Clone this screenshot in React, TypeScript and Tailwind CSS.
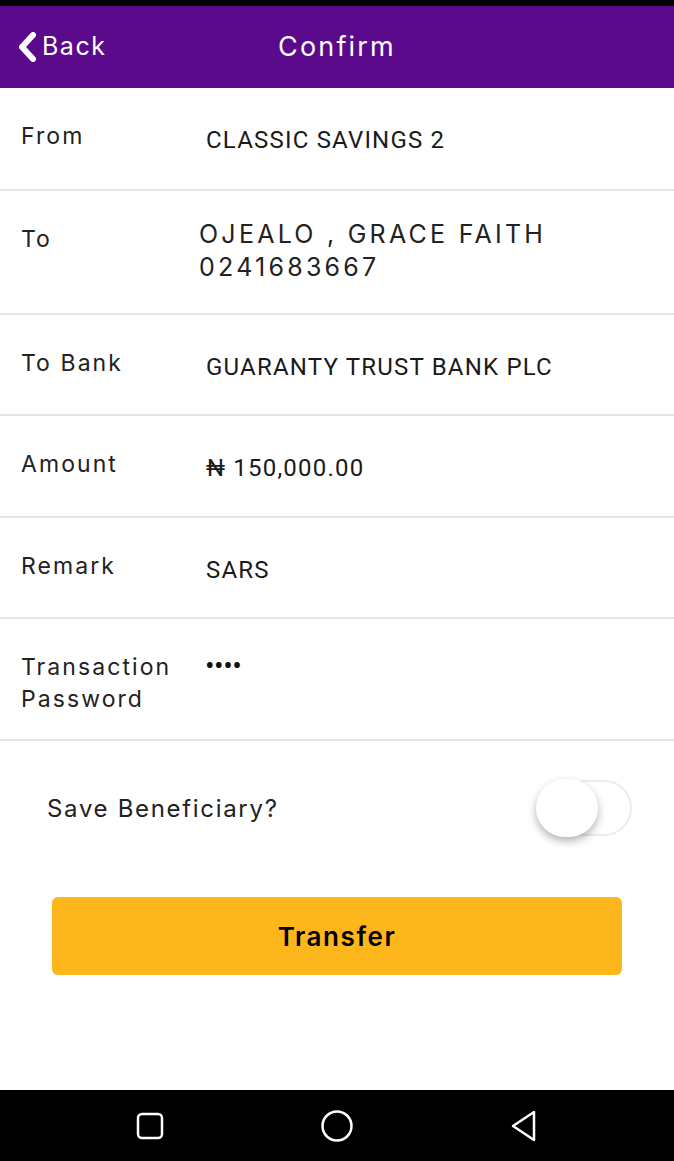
const label = "font-['Inter','Open_Sans',sans-serif] text-[23px] tracking-[0.09em] text-[#222]";
const value = "font-['Roboto',sans-serif] text-[24px] tracking-[0.05em] text-[#1a1a1a]";

function Row({ name, children, h }: { name: React.ReactNode; children: React.ReactNode; h: string }) {
    return (
        <div className={`flex border-b-2 border-[#e6e6e6] ${h}`}>
            <div className={`${label} w-[185px] shrink-0 pl-[21px] pt-[32px] leading-[32px]`}>{name}</div>
            <div className="pt-[32px]">{children}</div>
        </div>
    );
}

export default function App() {
    return (
        <div className="w-[674px] h-[1161px] flex flex-col bg-white overflow-hidden">
            <div className="h-[6px] bg-black" />
            <div className="h-[82px] bg-[#5a0a8a] relative flex items-center justify-center">
                <div className="absolute left-[17px] top-[22px] flex items-center gap-[3px] text-white">
                    <svg width="22" height="30" viewBox="0 0 22 30">
                        <path d="M16 3 L5 15 L16 27" fill="none" stroke="white" strokeWidth="6" strokeLinejoin="round" strokeLinecap="round" />
                    </svg>
                    <span className="font-['Inter',sans-serif] text-[25px] tracking-[0.06em]">Back</span>
                </div>
                <span className="font-['Inter',sans-serif] text-[27px] tracking-[0.08em] text-white">Confirm</span>
            </div>

            <Row name="From" h="h-[103px]">
                <div className={`${value} pl-[21px] pt-[4px] leading-[32px]`}>CLASSIC SAVINGS 2</div>
            </Row>
            <Row name="To" h="h-[124px]">
                <div className="font-['Inter','Open_Sans',sans-serif] text-[25px] tracking-[0.13em] text-[#222] pl-[14px] leading-[33px] -mt-[5px]">
                    OJEALO , GRACE FAITH
                    <br />
                    0241683667
                </div>
            </Row>
            <Row name="To Bank" h="h-[101px]">
                <div className={`${value} pl-[21px] pt-[4px] leading-[32px]`}>GUARANTY TRUST BANK PLC</div>
            </Row>
            <Row name="Amount" h="h-[102px]">
                <div className={`${value} pl-[21px] pt-[4px] leading-[32px]`}>₦ 150,000.00</div>
            </Row>
            <Row name="Remark" h="h-[101px]">
                <div className={`${value} pl-[21px] pt-[4px] leading-[32px]`}>SARS</div>
            </Row>
            <Row
                name={
                    <>
                        Transaction
                        <br />
                        Password
                    </>
                }
                h="h-[122px]"
            >
                <div className="pl-[21px] leading-[28px] text-[20px] font-bold tracking-[0.08em] text-[#111]">••••</div>
            </Row>

            <div className="flex items-center justify-between pl-[47px] pr-[42px] pt-[38px]">
                <span className="font-['Inter','Open_Sans',sans-serif] text-[24px] tracking-[0.07em] text-[#222]">Save Beneficiary?</span>
                <div className="relative w-[96px] h-[60px]">
                    <div className="absolute left-[22px] top-[1px] w-[74px] h-[56px] rounded-full border-2 border-[#ececec] bg-white" />
                    <div className="absolute left-0 top-0 w-[62px] h-[58px] rounded-full bg-white shadow-[0_4px_8px_rgba(0,0,0,0.3)]" />
                </div>
            </div>

            <div className="px-[52px] pt-[58px]">
                <button className="w-full h-[78px] rounded-[6px] bg-[#fdb71c] flex items-center justify-center font-['Inter',sans-serif] text-[26px] font-semibold tracking-[0.06em] text-black">
                    Transfer
                </button>
            </div>

            <div className="flex-1" />
            <div className="h-[71px] bg-black flex items-center justify-center">
                <div className="w-[187px] flex justify-center">
                    <svg width="30" height="30" viewBox="0 0 30 30">
                        <rect x="3" y="3" width="24" height="24" rx="4" fill="none" stroke="white" strokeWidth="2.5" />
                    </svg>
                </div>
                <div className="w-[187px] flex justify-center">
                    <svg width="34" height="34" viewBox="0 0 34 34">
                        <circle cx="17" cy="17" r="14.5" fill="none" stroke="white" strokeWidth="2.5" />
                    </svg>
                </div>
                <div className="w-[187px] flex justify-center">
                    <svg width="32" height="34" viewBox="0 0 32 34">
                        <path d="M26 3 L26 31 L5 17 Z" fill="none" stroke="white" strokeWidth="2.5" strokeLinejoin="round" />
                    </svg>
                </div>
            </div>
        </div>
    );
}
